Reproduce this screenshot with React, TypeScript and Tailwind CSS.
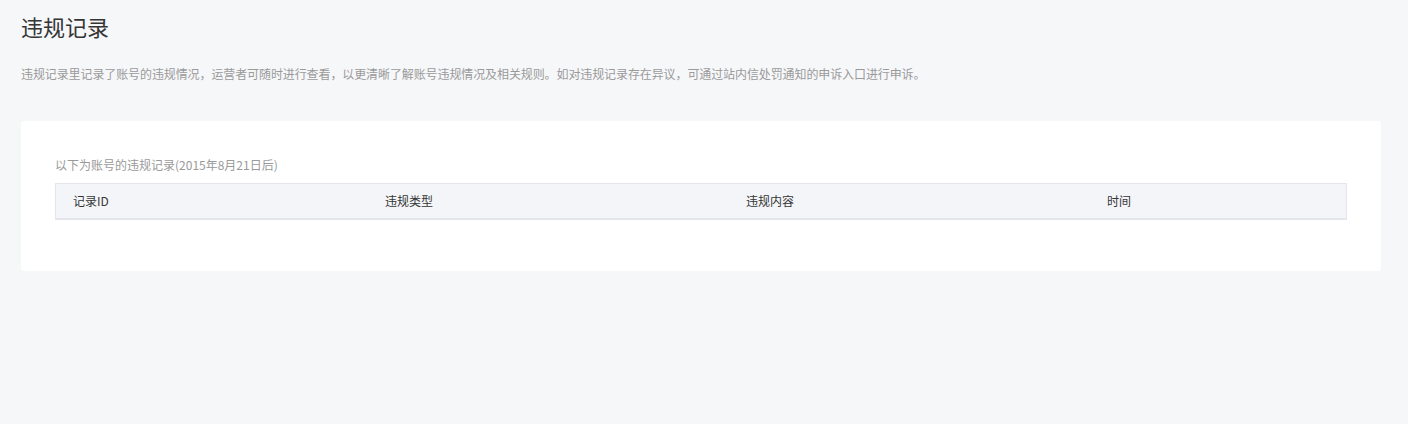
import React from 'react';

const font = { fontFamily: '"Noto Sans CJK SC", "Noto Sans", sans-serif' };

const columns = [
  { label: '记录ID', w: 'w-[312px]' },
  { label: '违规类型', w: 'w-[361px]' },
  { label: '违规内容', w: 'w-[361px]' },
  { label: '时间', w: 'flex-1' },
];

export default function App() {
  return (
    <div className="min-h-[424px] w-full bg-[#f6f7f9] px-[21px] pt-[10px]" style={font}>
      <h2 className="text-[22px] leading-[32px] text-[#353535] font-normal">违规记录</h2>
      <p className="mt-[23px] text-[12px] leading-[18px] tracking-[-0.1px] text-[#9a9a9a]">
        违规记录里记录了账号的违规情况，运营者可随时进行查看，以更清晰了解账号违规情况及相关规则。如对违规记录存在异议，可通过站内信处罚通知的申诉入口进行申诉。
      </p>

      <div className="mt-[38px] w-[1360px] rounded-[3px] bg-white px-[34px] pt-[35px] pb-[51px]">
        <div className="text-[12px] leading-[18px] text-[#9a9a9a]">以下为账号的违规记录(2015年8月21日后)</div>
        <div className="mt-[9px] flex h-[37px] items-center border border-[#e4e6eb] border-b-2 bg-[#f4f5f9] pl-[17px] text-[12px] text-[#353535]">
          {columns.map((c) => (
            <div key={c.label} className={c.w}>
              {c.label}
            </div>
          ))}
        </div>
      </div>
    </div>
  );
}
